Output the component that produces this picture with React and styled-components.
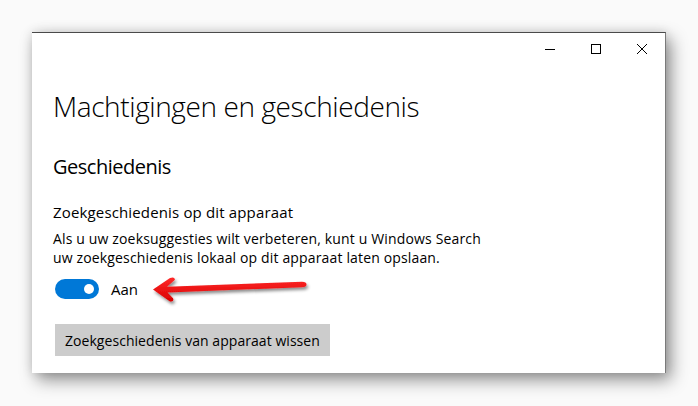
import React from "react";
import styled, { createGlobalStyle } from "styled-components";

const Global = createGlobalStyle`
  html, body { margin: 0; padding: 0; }
  body {
    background: #fafafa;
    font-family: "Open Sans", "Noto Sans", "Liberation Sans", sans-serif;
    color: #000;
  }
`;

const Page = styled.div`
  width: 698px;
  height: 406px;
  box-sizing: border-box;
  padding: 32px 0 0 32px;
  overflow: hidden;
`;

const Window = styled.div`
  width: 634px;
  height: 341px;
  box-sizing: border-box;
  background: #fff;
  border-top: 1px solid #4a4a4a;
  border-right: 1px solid #7a7a7a;
  box-shadow: 5px 7px 16px rgba(0, 0, 0, 0.42), 0 0 10px rgba(0, 0, 0, 0.12);
  display: flex;
  flex-direction: column;
`;

const TitleBar = styled.div`
  height: 31px;
  display: flex;
  justify-content: flex-end;
`;

const CtrlButton = styled.div`
  width: 46px;
  height: 31px;
  display: flex;
  align-items: center;
  justify-content: center;
`;

const Content = styled.div`
  padding: 0 21px;
  display: flex;
  flex-direction: column;
  align-items: flex-start;
`;

const Title = styled.h1`
  margin: 24px 0 0;
  font-size: 28px;
  line-height: 36px;
  font-weight: 300;
  letter-spacing: -0.4px;
`;

const Section = styled.h2`
  margin: 29px 0 0;
  font-size: 20px;
  line-height: 28px;
  font-weight: 400;
  letter-spacing: -0.5px;
`;

const SettingName = styled.div`
  margin-top: 21px;
  font-size: 15px;
  line-height: 20px;
  letter-spacing: 0.15px;
`;

const Description = styled.p`
  margin: 7px 0 0;
  font-size: 14px;
  line-height: 19px;
  letter-spacing: 0.15px;
  width: 440px;
`;

const ToggleRow = styled.div`
  margin: 12px 0 0 2px;
  display: flex;
  align-items: center;
  height: 20px;
`;

const Toggle = styled.div`
  width: 44px;
  height: 20px;
  border-radius: 10px;
  background: ${(p) => (p.$on ? "#0078d7" : "#fff")};
  box-sizing: border-box;
  display: flex;
  align-items: center;
  justify-content: ${(p) => (p.$on ? "flex-end" : "flex-start")};
  padding: 0 5px;
`;

const Thumb = styled.div`
  width: 10px;
  height: 10px;
  border-radius: 50%;
  background: #fff;
`;

const ToggleLabel = styled.span`
  margin-left: 12px;
  font-size: 15px;
  line-height: 20px;
`;

const Arrow = styled.svg`
  margin-left: 12px;
  overflow: visible;
  flex: none;
`;

const Button = styled.button`
  margin: 25px 0 0 2px;
  height: 32px;
  padding: 0 10px;
  border: none;
  background: #cccccc;
  font-family: inherit;
  font-size: 14px;
  letter-spacing: 0.05px;
  color: #000;
  white-space: nowrap;
`;

export default function App() {
  return (
    <>
      <Global />
      <Page>
        <Window>
          <TitleBar>
            <CtrlButton>
              <svg width="10" height="10" viewBox="0 0 10 10">
                <path d="M0 5.5H10" stroke="#000" strokeWidth="1" />
              </svg>
            </CtrlButton>
            <CtrlButton>
              <svg width="10" height="10" viewBox="0 0 10 10">
                <rect x="0.5" y="0.5" width="9" height="9" fill="none" stroke="#000" strokeWidth="1" />
              </svg>
            </CtrlButton>
            <CtrlButton>
              <svg width="10" height="10" viewBox="0 0 10 10">
                <path d="M0 0L10 10M10 0L0 10" stroke="#000" strokeWidth="1" />
              </svg>
            </CtrlButton>
          </TitleBar>
          <Content>
            <Title>Machtigingen en geschiedenis</Title>
            <Section>Geschiedenis</Section>
            <SettingName>Zoekgeschiedenis op dit apparaat</SettingName>
            <Description>
              Als u uw zoeksuggesties wilt verbeteren, kunt u Windows Search uw zoekgeschiedenis lokaal op dit apparaat laten opslaan.
            </Description>
            <ToggleRow>
              <Toggle $on>
                <Thumb />
              </Toggle>
              <ToggleLabel>Aan</ToggleLabel>
              <Arrow width="160" height="30" viewBox="0 0 160 30">
                <defs>
                  <filter id="sh" x="-10%" y="-40%" width="130%" height="200%">
                    <feDropShadow dx="1.5" dy="2.5" stdDeviation="1.6" floodColor="#000" floodOpacity="0.45" />
                  </filter>
                  <linearGradient id="rg" x1="0" y1="0" x2="0" y2="1">
                    <stop offset="0" stopColor="#ff2a2a" />
                    <stop offset="1" stopColor="#d90000" />
                  </linearGradient>
                </defs>
                <path
                  filter="url(#sh)"
                  fill="url(#rg)"
                  d="M3 15.5 L20 4 Q24.5 2.3 25 5.8 L17 12.8 L152 7.8 Q156.5 7.8 156.5 10.4 Q156.5 13 152 13.2 L17.5 18.6 L23 24.2 Q24.5 28 20 27.4 Z"
                />
              </Arrow>
            </ToggleRow>
            <Button>Zoekgeschiedenis van apparaat wissen</Button>
          </Content>
        </Window>
      </Page>
    </>
  );
}
